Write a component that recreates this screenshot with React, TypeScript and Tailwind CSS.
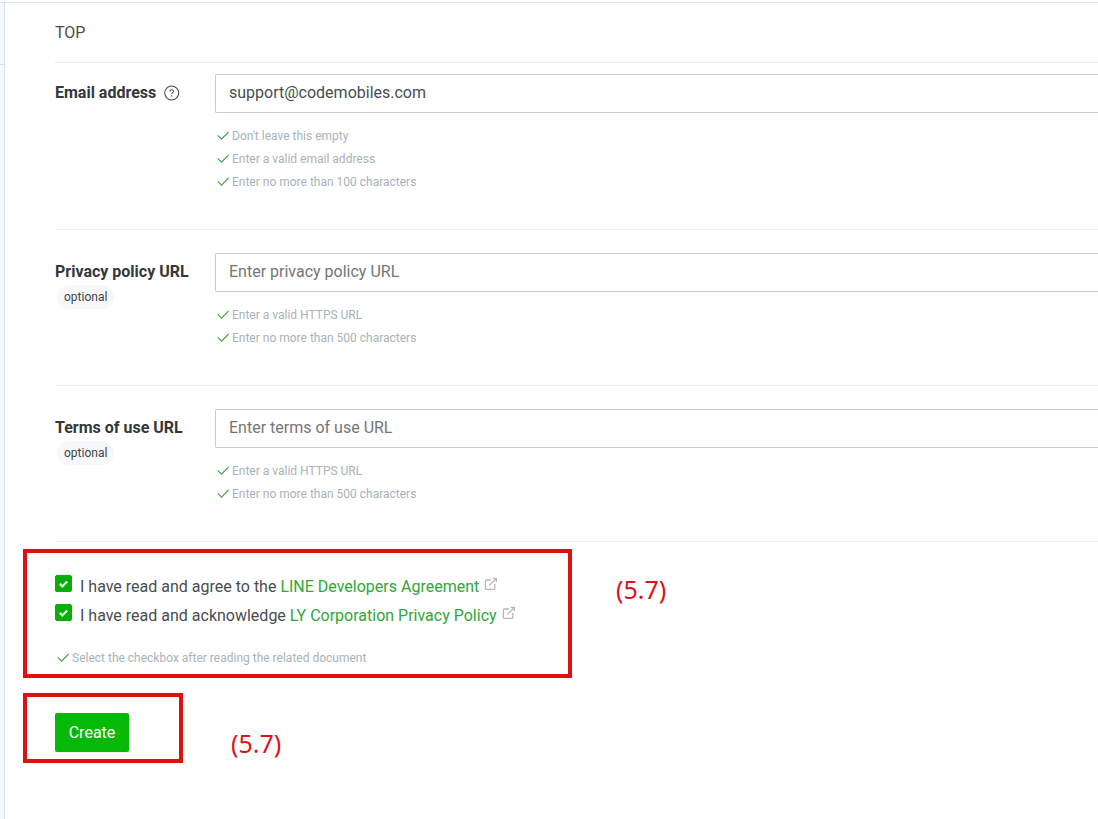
import { useState } from "react";
import type { ReactNode } from "react";

interface FieldProps {
    id: string;
    label: string;
    type: string;
    placeholder?: string;
    defaultValue?: string;
    hints: string[];
    help?: boolean;
    optional?: boolean;
}

const fields: FieldProps[] = [
    {
        id: "email",
        label: "Email address",
        type: "email",
        defaultValue: "support@codemobiles.com",
        hints: ["Don't leave this empty", "Enter a valid email address", "Enter no more than 100 characters"],
        help: true,
    },
    {
        id: "privacy-url",
        label: "Privacy policy URL",
        type: "url",
        placeholder: "Enter privacy policy URL",
        hints: ["Enter a valid HTTPS URL", "Enter no more than 500 characters"],
        optional: true,
    },
    {
        id: "terms-url",
        label: "Terms of use URL",
        type: "url",
        placeholder: "Enter terms of use URL",
        hints: ["Enter a valid HTTPS URL", "Enter no more than 500 characters"],
        optional: true,
    },
];

function Hint({ children }: { children: ReactNode }) {
    return (
        <div className="flex h-[23px] items-center gap-[3px] pl-0.5 text-xs text-[#a9b2b8]">
            <svg width="12" height="10" viewBox="0 0 12 10" fill="none" stroke="#4ba64b" strokeWidth="1.3" aria-hidden="true">
                <path d="M0.8 4.4 4.5 8.1 11.7 0.9" />
            </svg>
            <span>{children}</span>
        </div>
    );
}

function HelpIcon() {
    return (
        <svg width="16" height="16" viewBox="0 0 16 16" fill="none" stroke="#4a4f50" aria-hidden="true">
            <circle cx="7.7" cy="8" r="7" strokeWidth="1.1" />
            <path d="M5.9 6.5C5.9 5.4 6.7 4.8 7.7 4.8s1.8.6 1.8 1.6c0 1.2-1.8 1.3-1.8 2.7" strokeWidth="1.1" />
            <path d="M7.7 10.2v1.3" strokeWidth="1.2" />
        </svg>
    );
}

function ExternalIcon() {
    return (
        <svg className="mt-[5px]" width="14" height="14" viewBox="0 0 14 14" fill="none" stroke="#b4b8b8" strokeWidth="1.3" aria-hidden="true">
            <path d="M7 3H2.6Q1.4 3 1.4 4.2v7q0 1.2 1.2 1.2h7q1.2 0 1.2-1.2V7" />
            <path d="M5.4 8.4 12 1.8M8.6 1.4h3.8v3.8" />
        </svg>
    );
}

function Field({ id, label, type, placeholder, defaultValue, hints, help, optional }: FieldProps) {
    return (
        <div className={`flex border-b border-[#ebeeef] pb-9 ${help ? "pt-[11px]" : "pt-[23px]"}`}>
            <div className="w-40 shrink-0 pt-[7px]">
                <div className="flex items-center gap-2">
                    <label htmlFor={id} className="font-bold text-[#333839]">
                        {label}
                    </label>
                    {help && (
                        <button type="button" aria-label="Help">
                            <HelpIcon />
                        </button>
                    )}
                </div>
                {optional && (
                    <span className="ml-0.5 mt-px inline-flex h-6 items-center rounded-full bg-[#f7f8fa] px-[7px] text-xs text-[#3d4344]">
                        optional
                    </span>
                )}
            </div>
            <div className="min-w-0 flex-1">
                <input
                    id={id}
                    type={type}
                    placeholder={placeholder}
                    defaultValue={defaultValue}
                    className="block h-[39px] w-full rounded-l-xs border border-r-0 border-[#c8cbcc] bg-white px-[13px] pb-0.5 text-[#494d50] outline-none placeholder:text-[#757575]"
                />
                <div className="mt-[11px]">
                    {hints.map((hint) => (
                        <Hint key={hint}>{hint}</Hint>
                    ))}
                </div>
            </div>
        </div>
    );
}

function Agreement({ id, text, link }: { id: string; text: string; link: string }) {
    const [checked, setChecked] = useState(true);

    return (
        <div className="flex h-[29px] items-start">
            <div className="mt-[3px] grid">
                <input
                    id={id}
                    type="checkbox"
                    checked={checked}
                    onChange={(e) => setChecked(e.target.checked)}
                    className="col-start-1 row-start-1 size-[17px] appearance-none rounded-xs border border-[#c8cbcc] checked:border-[#06b006] checked:bg-[#06b006]"
                />
                {checked && (
                    <svg
                        className="pointer-events-none col-start-1 row-start-1 place-self-center"
                        width="9"
                        height="8"
                        viewBox="0 0 9 8"
                        fill="none"
                        stroke="#e6fae6"
                        strokeWidth="2.2"
                        aria-hidden="true"
                    >
                        <path d="M0.8 3.9 3.4 6.4 8.2 1.5" />
                    </svg>
                )}
            </div>
            <label htmlFor={id} className="ml-2 mt-[3px] whitespace-pre">
                {text}{" "}
            </label>
            <a href="#" className="flex items-start gap-[5px] text-[#2ea836]">
                <span className="mt-[3px]">{link}</span>
                <ExternalIcon />
            </a>
        </div>
    );
}

interface CalloutProps {
    children: ReactNode;
    boxClass: string;
    noteClass: string;
}

function Callout({ children, boxClass, noteClass }: CalloutProps) {
    return (
        <div className="-ml-8 flex items-start">
            <div className={`shrink-0 border-4 border-[#e00f10] ${boxClass}`}>{children}</div>
            <span className={`font-['Noto_Sans','Open_Sans',sans-serif] text-[25px] leading-8 text-[#d9141a] ${noteClass}`}>
                (5.7)
            </span>
        </div>
    );
}

export default function App() {
    return (
        <div className="flex min-h-screen flex-col bg-white pt-0.5 font-[Roboto,sans-serif] text-base text-[#494d50]">
            <div className="flex flex-1 border-t border-[#dbe3e6]">
                <aside className="w-[5px] shrink-0 border-r border-[#dce3e8] bg-[#f5f9fb]">
                    <div className="h-[62px] border-b border-[#dce3e8]" />
                </aside>
                <main className="min-w-0 flex-1 pl-[50px]">
                    <h1 className="flex h-[60px] items-center border-b border-[#e6eaec]">TOP</h1>
                    <form onSubmit={(e) => e.preventDefault()}>
                        {fields.map((field) => (
                            <Field key={field.id} {...field} />
                        ))}
                        <div className="flex flex-col gap-[15px] pt-[7px]">
                            <Callout boxClass="w-[549px] pb-[5px] pl-7 pt-[19px]" noteClass="ml-11 mt-6">
                                <Agreement id="agreement" text="I have read and agree to the" link="LINE Developers Agreement" />
                                <Agreement id="privacy" text="I have read and acknowledge" link="LY Corporation Privacy Policy" />
                                <div className="mt-4">
                                    <Hint>Select the checkbox after reading the related document</Hint>
                                </div>
                            </Callout>
                            <Callout boxClass="w-40 pb-[7px] pl-7 pt-4" noteClass="ml-12 mt-[34px]">
                                <button type="submit" className="block h-[39px] w-[74px] rounded-xs bg-[#06b906] text-white">
                                    Create
                                </button>
                            </Callout>
                        </div>
                    </form>
                </main>
            </div>
        </div>
    );
}
